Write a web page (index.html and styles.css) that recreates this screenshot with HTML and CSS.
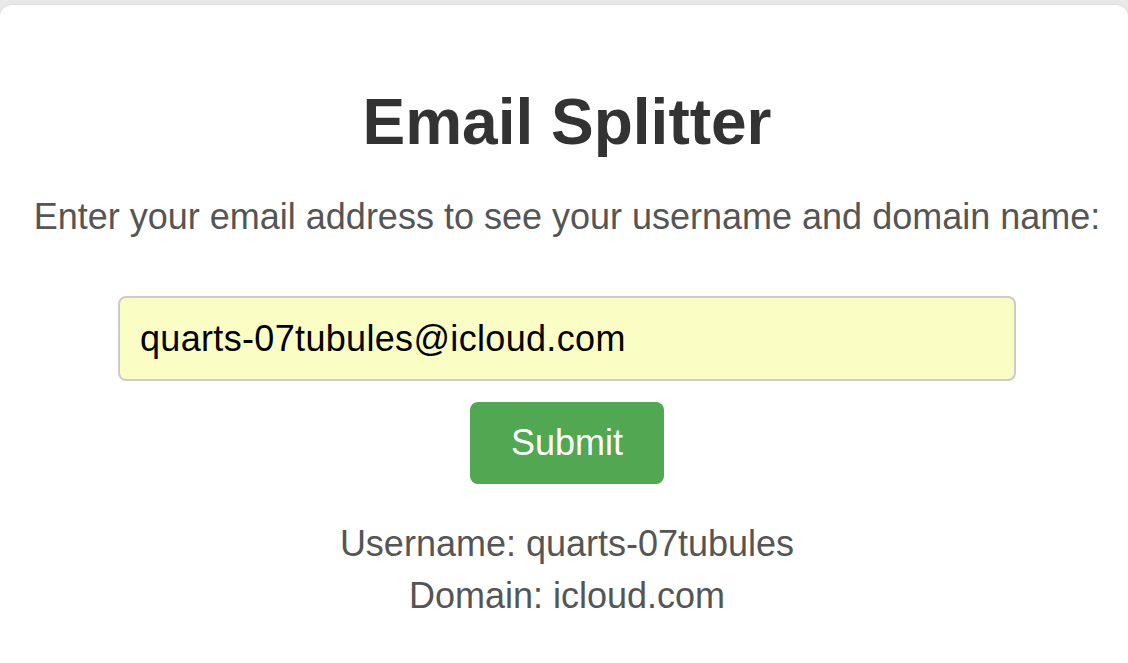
FILE: index.html
```html
<!DOCTYPE html>
<html lang="en">
<head>
<meta charset="utf-8">
<title>Email Splitter</title>
<link rel="stylesheet" href="styles.css">
</head>
<body>
<main class="card">
  <h1 class="title">Email Splitter</h1>
  <p class="subtitle">Enter your email address to see your username and domain name:</p>
  <form class="form">
    <input class="email-input" type="text" value="quarts-07tubules@icloud.com">
    <button class="submit-btn" type="button">Submit</button>
  </form>
  <div class="results">
    <div class="result-line">Username: quarts-07tubules</div>
    <div class="result-line">Domain: icloud.com</div>
  </div>
</main>
</body>
</html>
```

FILE: styles.css
```css
html, body {
  margin: 0;
  padding: 0;
  height: 100%;
  overflow: hidden;
}

body {
  background: #e9e9e9;
  padding-top: 5px;
  box-sizing: border-box;
  font-family: "Liberation Sans", Arial, sans-serif;
}

.card {
  background: #ffffff;
  border-radius: 12px;
  box-shadow: 0 0 4px rgba(0, 0, 0, 0.08);
  min-height: 720px;
  box-sizing: border-box;
  padding: 80px 0 0 6px;
  display: flex;
  flex-direction: column;
  align-items: center;
}

.title {
  margin: 0;
  font-size: 64px;
  line-height: 74px;
  font-weight: bold;
  color: #333333;
}

.subtitle {
  margin: 37px 0 0;
  font-size: 36px;
  line-height: 41px;
  color: #555555;
  white-space: nowrap;
}

.form {
  margin-top: 59px;
  display: flex;
  flex-direction: column;
  align-items: center;
  gap: 21px;
}

.email-input {
  box-sizing: border-box;
  width: 898px;
  height: 85px;
  margin: 0;
  padding: 0 20px;
  border: 2px solid #cccccc;
  border-radius: 8px;
  background: #fafdc4;
  font-family: "Liberation Sans", Arial, sans-serif;
  font-size: 36px;
  letter-spacing: 0.33px;
  color: #000000;
  outline: none;
}

.submit-btn {
  box-sizing: border-box;
  width: 194px;
  height: 82px;
  margin: 0;
  padding: 0;
  border: none;
  border-radius: 8px;
  background: #52a752;
  color: #ffffff;
  font-family: "Liberation Sans", Arial, sans-serif;
  font-size: 36px;
  cursor: pointer;
}

.results {
  margin-top: 34px;
  display: flex;
  flex-direction: column;
  align-items: center;
}

.result-line {
  font-size: 36px;
  line-height: 52px;
  color: #555555;
}
```
